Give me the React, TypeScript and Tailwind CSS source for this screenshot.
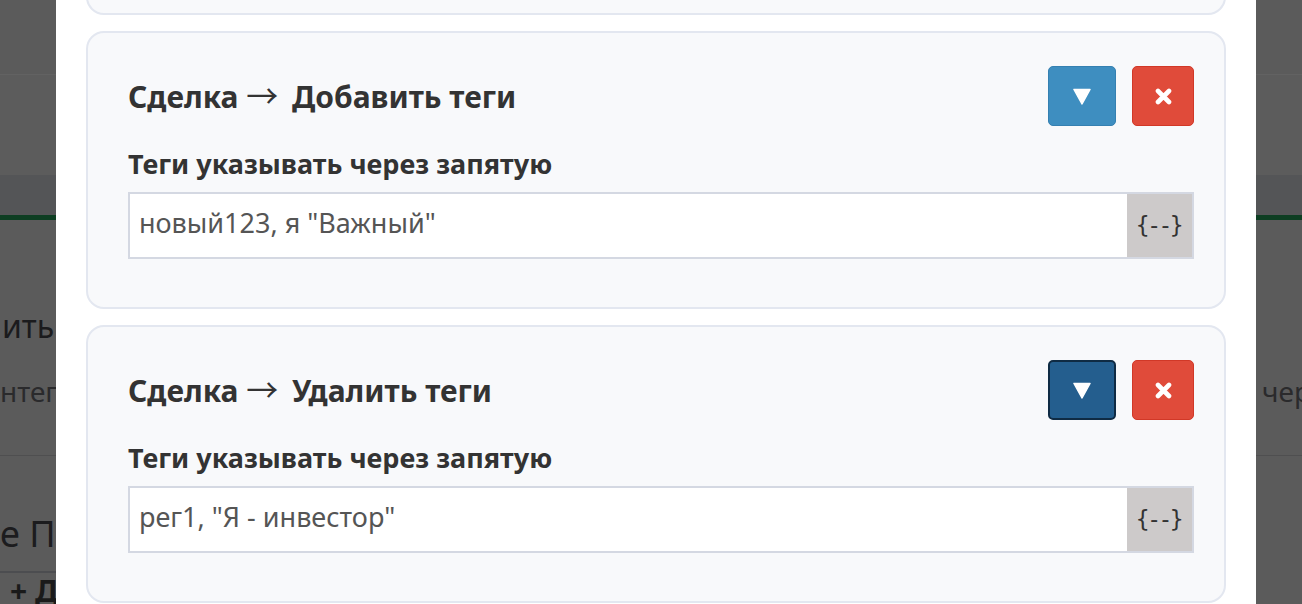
import React from 'react';

const FONT = { fontFamily: '"Noto Sans", "Open Sans", sans-serif' };

function Triangle() {
  return (
    <svg width="18" height="17" viewBox="0 0 18 17">
      <path d="M1 1.5 L17 1.5 L9 16 Z" fill="#fff" stroke="#fff" strokeWidth="1.5" strokeLinejoin="round" />
    </svg>
  );
}

function Cross() {
  return (
    <svg width="17" height="17" viewBox="0 0 17 17">
      <path d="M3 3 L14 14 M14 3 L3 14" stroke="#fff" strokeWidth="4.6" strokeLinecap="round" />
    </svg>
  );
}

type CardProps = { entity: string; action: string; value: string; active?: boolean };

function ActionCard({ entity, action, value, active }: CardProps) {
  return (
    <div className="border-2 border-[#e3e7f0] rounded-[18px] bg-[#f8f9fb] pl-[40px] pr-[30px] pt-[33px] pb-[48px]">
      <div className="flex items-center justify-between h-[60px]">
        <h3 className="text-[30px] font-bold text-[#333] whitespace-nowrap">
          {entity}{' '}
          <span
            className="font-normal text-[32px] leading-none mr-[6px]"
            style={{ fontFamily: '"Noto Sans CJK SC", "DejaVu Sans", sans-serif' }}
          >
            →
          </span>{' '}
          {action}
        </h3>
        <div className="flex gap-4">
          <button
            className={`w-[68px] h-[60px] rounded-[5px] flex items-center justify-center ${
              active ? 'bg-[#245e8e] border-2 border-[#0f2b44]' : 'bg-[#3e8ec0] border border-[#3580b1]'
            }`}
          >
            <Triangle />
          </button>
          <button className="w-[62px] h-[60px] rounded-[5px] flex items-center justify-center bg-[#e04b3a] border border-[#d13827]">
            <Cross />
          </button>
        </div>
      </div>
      <div className="mt-[21px] text-[27px] leading-[34px] font-bold text-[#333]">Теги указывать через запятую</div>
      <div className="mt-[11px] flex h-[67px] border-2 border-[#d4d8e2] bg-white">
        <div className="flex-1 flex items-center pl-[9px] pb-[4px] text-[27px] text-[#555]">{value}</div>
        <div
          className="w-[65px] bg-[#cdcaca] flex items-center justify-center text-[23px] tracking-[-2.5px] text-[#333] pr-[2px]"
          style={{ fontFamily: '"DejaVu Sans Mono", "Liberation Mono", monospace' }}
        >
          {'{--}'}
        </div>
      </div>
    </div>
  );
}

function Backdrop({ right }: { right?: boolean }) {
  return (
    <div className="h-full overflow-hidden bg-[#5b5b5b] whitespace-nowrap">
      <div className="h-[74px]" />
      <div className="h-px bg-[#626262]" />
      <div className="h-[100px] bg-[#5c5c5c]" />
      <div className="h-[40px] bg-[#545557]" />
      <div className="h-[5px] bg-[#0d3e22]" />
      <div className={`mt-[86px] h-[40px] text-[32px] leading-[40px] text-[#1b1b1d] pl-[2px] ${right ? 'invisible' : ''}`}>ить</div>
      <div className={`mt-[27px] h-[36px] text-[28px] leading-[36px] text-[#2a2a2c] ${right ? 'pl-[6px]' : ''}`}>
        {right ? 'через' : 'нтег'}
      </div>
      <div className="mt-[46px] h-px bg-[#4f4f50]" />
      {!right && (
        <>
          <div className="mt-[56px] h-[44px] text-[36px] leading-[44px] text-[#1c1c1e]">е П</div>
          <div className="mt-[15px] h-[2px] bg-[#4c4d50]" />
          <div className="pl-[10px] text-[30px] leading-[36px] font-bold text-[#1a1a1a]">+ Д</div>
        </>
      )}
    </div>
  );
}

export default function App() {
  return (
    <div className="flex h-[604px] w-full overflow-hidden" style={FONT}>
      <div className="w-[56px] shrink-0">
        <Backdrop />
      </div>
      <div className="w-[1200px] shrink-0 bg-white px-[30px] overflow-hidden">
        <div className="flex flex-col gap-4 -mt-[85px]">
          <div className="h-[100px] border-2 border-[#e3e7f0] rounded-[18px] bg-[#f8f9fb]" />
          <ActionCard entity="Сделка" action="Добавить теги" value={'новый123, я "Важный"'} />
          <ActionCard entity="Сделка" action="Удалить теги" value={'рег1, "Я - инвестор"'} active />
        </div>
      </div>
      <div className="flex-1">
        <Backdrop right />
      </div>
    </div>
  );
}
